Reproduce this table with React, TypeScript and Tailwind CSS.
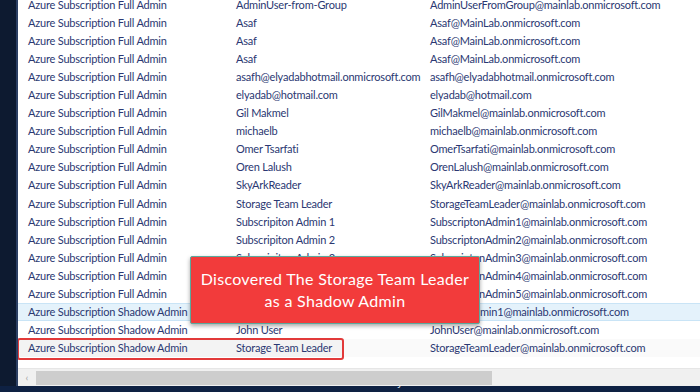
import React from 'react';

interface Row {
  role: string;
  name: string;
  upn: string;
}

const rows: Row[] = [
  { role: 'Azure Subscription Full Admin', name: 'AdminUser-from-Group', upn: 'AdminUserFromGroup@mainlab.onmicrosoft.com' },
  { role: 'Azure Subscription Full Admin', name: 'Asaf', upn: 'Asaf@MainLab.onmicrosoft.com' },
  { role: 'Azure Subscription Full Admin', name: 'Asaf', upn: 'Asaf@MainLab.onmicrosoft.com' },
  { role: 'Azure Subscription Full Admin', name: 'Asaf', upn: 'Asaf@MainLab.onmicrosoft.com' },
  { role: 'Azure Subscription Full Admin', name: 'asafh@elyadabhotmail.onmicrosoft.com', upn: 'asafh@elyadabhotmail.onmicrosoft.com' },
  { role: 'Azure Subscription Full Admin', name: 'elyadab@hotmail.com', upn: 'elyadab@hotmail.com' },
  { role: 'Azure Subscription Full Admin', name: 'Gil Makmel', upn: 'GilMakmel@mainlab.onmicrosoft.com' },
  { role: 'Azure Subscription Full Admin', name: 'michaelb', upn: 'michaelb@mainlab.onmicrosoft.com' },
  { role: 'Azure Subscription Full Admin', name: 'Omer Tsarfati', upn: 'OmerTsarfati@mainlab.onmicrosoft.com' },
  { role: 'Azure Subscription Full Admin', name: 'Oren Lalush', upn: 'OrenLalush@mainlab.onmicrosoft.com' },
  { role: 'Azure Subscription Full Admin', name: 'SkyArkReader', upn: 'SkyArkReader@mainlab.onmicrosoft.com' },
  { role: 'Azure Subscription Full Admin', name: 'Storage Team Leader', upn: 'StorageTeamLeader@mainlab.onmicrosoft.com' },
  { role: 'Azure Subscription Full Admin', name: 'Subscripiton Admin 1', upn: 'SubscriptonAdmin1@mainlab.onmicrosoft.com' },
  { role: 'Azure Subscription Full Admin', name: 'Subscripiton Admin 2', upn: 'SubscriptonAdmin2@mainlab.onmicrosoft.com' },
  { role: 'Azure Subscription Full Admin', name: 'Subscripiton Admin 3', upn: 'SubscriptonAdmin3@mainlab.onmicrosoft.com' },
  { role: 'Azure Subscription Full Admin', name: 'Subscripiton Admin 4', upn: 'SubscriptonAdmin4@mainlab.onmicrosoft.com' },
  { role: 'Azure Subscription Full Admin', name: 'Subscripiton Admin 5', upn: 'SubscriptonAdmin5@mainlab.onmicrosoft.com' },
  { role: 'Azure Subscription Shadow Admin', name: 'Shadow Admin 1', upn: 'ShadowAdmin1@mainlab.onmicrosoft.com' },
  { role: 'Azure Subscription Shadow Admin', name: 'John User', upn: 'JohnUser@mainlab.onmicrosoft.com' },
  { role: 'Azure Subscription Shadow Admin', name: 'Storage Team Leader', upn: 'StorageTeamLeader@mainlab.onmicrosoft.com' },
];

const GridRow: React.FC<{ row: Row; tone: string }> = ({ row, tone }) => (
  <div className={'flex items-center h-[18.1px] whitespace-nowrap pl-[10px] ' + tone}>
    <div className="w-[208px] shrink-0">{row.role}</div>
    <div className="w-[194px] shrink-0">{row.name}</div>
    <div className="shrink-0">{row.upn}</div>
  </div>
);

export default function App() {
  return (
    <div className="w-[700px] h-[392px] overflow-hidden bg-[#0d1a30] flex flex-col font-['Lato',sans-serif]">
      <div className="flex h-[386px]">
        <div className="w-[16px] shrink-0 bg-[#0d1a30]" />
        <div className="flex-1 bg-white border-l-2 border-[#2b3f63] flex flex-col overflow-hidden">
          <div className="relative flex-1 overflow-hidden">
            <div className="-mt-[5px] text-[11px] tracking-[-0.2px] text-[#2b3872] leading-none">
              {rows.map((r, i) => (
                <GridRow
                  key={i}
                  row={r}
                  tone={
                    i === 17
                      ? 'bg-[#e4f2fb] border-y border-[#c9e4f6]'
                      : i === 19
                      ? 'bg-[linear-gradient(to_right,#f3f3f3_0,#f3f3f3_326px,#fafafa_326px)]'
                      : ''
                  }
                />
              ))}
            </div>
            <div className="absolute left-[-1px] top-[338px] w-[327px] h-[22px] border-2 border-[#e23a3a] rounded-[3px]" />
            <div className="absolute left-[172px] top-[256px] w-[290px] h-[68px] bg-[#f23b3b] border border-[#5aa99d] rounded-[2px] shadow-[0_2px_4px_rgba(0,0,0,0.35)] flex flex-col items-center justify-center text-white text-[16px] leading-[22px] whitespace-nowrap tracking-[0.3px]">
              <div>Discovered The Storage Team Leader</div>
              <div>as a Shadow Admin</div>
            </div>
          </div>
          <div className="h-[18px] flex items-center bg-[#f0f0f0] border-t border-[#e6e6e6]">
            <div className="w-[18px] flex items-center justify-center text-[#a0a0a0] text-[10px]">‹</div>
            <div className="w-[456px] h-[14px] bg-[#cdcdcd]" />
          </div>
        </div>
      </div>
      <div className="h-[6px] overflow-hidden bg-[#0e2143] pl-[212px]">
        <div className="-mt-[11px] text-[11px] text-[#dfe6f2] font-['Liberation_Mono',monospace] whitespace-nowrap">
          C:\Work\DEMO\AzureStealth\SkyArk-master\AzureStealth\AzureStealth
        </div>
      </div>
    </div>
  );
}
